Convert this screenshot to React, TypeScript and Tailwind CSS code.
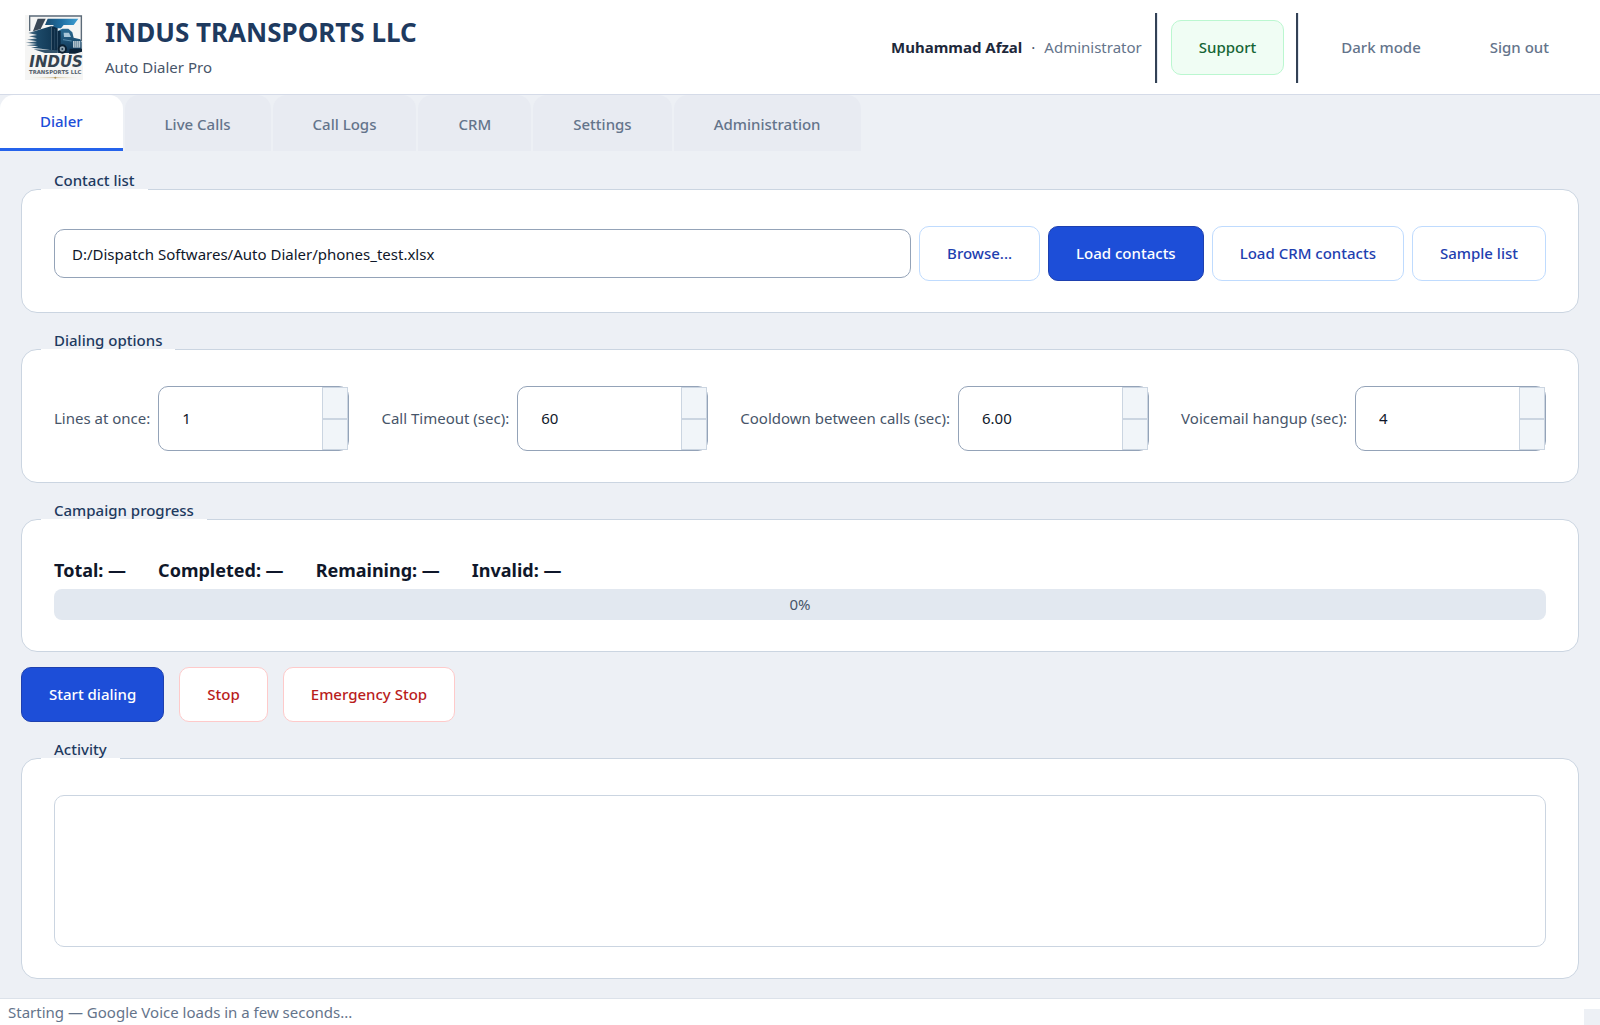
import { useState, type ReactNode } from "react";

const tabs = ["Dialer", "Live Calls", "Call Logs", "CRM", "Settings", "Administration"];

const options = [
  { id: "lines", label: "Lines at once:", value: "1" },
  { id: "timeout", label: "Call Timeout (sec):", value: "60" },
  { id: "cooldown", label: "Cooldown between calls (sec):", value: "6.00" },
  { id: "voicemail", label: "Voicemail hangup (sec):", value: "4" },
];

const stats = ["Total", "Completed", "Remaining", "Invalid"];

function Logo() {
  return (
    <svg viewBox="0 0 174 195" className="h-[65px] w-[58px]" role="img" aria-label="Indus Transports LLC">
      <defs>
        <linearGradient id="bar" x1="0" x2="1">
          <stop offset="0" stopColor="#1b4c70" />
          <stop offset="0.5" stopColor="#1f6fa3" />
          <stop offset="1" stopColor="#3fa0d4" />
        </linearGradient>
        <linearGradient id="trailer" x1="0" x2="1">
          <stop offset="0" stopColor="#6f8798" />
          <stop offset="0.45" stopColor="#1d4a69" />
          <stop offset="1" stopColor="#123a57" />
        </linearGradient>
        <linearGradient id="cab" x1="0" x2="0" y1="0" y2="1">
          <stop offset="0" stopColor="#2b6c94" />
          <stop offset="1" stopColor="#0f3352" />
        </linearGradient>
        <linearGradient id="gold" gradientUnits="userSpaceOnUse" x1="14" x2="162" y1="0" y2="0">
          <stop offset="0" stopColor="#e9dfc8" stopOpacity="0" />
          <stop offset="0.5" stopColor="#cdb98c" />
          <stop offset="1" stopColor="#e9dfc8" stopOpacity="0" />
        </linearGradient>
      </defs>
      <rect width="174" height="195" fill="#f5f5f4" />
      <path d="M14 48V3H169V78" fill="none" stroke="#5c6b79" strokeWidth="4" />
      <path d="M38 11H62L47 42L24 49Z" fill="#3a4755" />
      <path d="M68 11H160L146 30H116L108 40H82L86 30H60Z" fill="url(#bar)" />
      <path d="M10 54L80 33V106L48 101L18 98L40 94L4 91L36 87L2 83L36 79L6 74L36 70L12 64L36 60Z" fill="url(#trailer)" />
      <path d="M80 33L98 40V110L80 106Z" fill="#0d2c46" />
      <path d="M89 42V104" stroke="#3f617b" strokeWidth="1.5" />
      <path d="M98 48L112 41H130L142 52L146 68L166 73L170 82V108L150 114H98Z" fill="url(#cab)" />
      <path d="M116 53H132L138 66H117Z" fill="#a9c6d8" />
      <path d="M98 48H107V104H98Z" fill="#0b2a44" />
      <path d="M144 78H166V98H144Z" fill="#b7c7d2" />
      <path d="M149 78V98M154 78V98M160 78V98" stroke="#56758c" strokeWidth="2" />
      <path d="M114 74L140 78" stroke="#77a7c6" strokeWidth="2" />
      <path d="M134 101H171V110L150 116H132Z" fill="#0c2338" />
      <path d="M26 103L98 106V114H60Z" fill="#33536c" />
      <circle cx="112" cy="102" r="14" fill="#0b1f31" />
      <circle cx="112" cy="102" r="8" fill="#8fa3b1" />
      <circle cx="112" cy="102" r="3" fill="#1d3950" />
      <text x="13" y="155" fontSize="45" fontWeight="700" fontStyle="italic" fontFamily="DejaVu Sans, sans-serif" fill="#34424f">INDUS</text>
      <text x="12" y="176" fontSize="16" fontWeight="700" fontFamily="DejaVu Sans, sans-serif" fill="#55616d">TRANSPORTS LLC</text>
      <path d="M14 188H162" stroke="url(#gold)" strokeWidth="3" />
      <circle cx="91" cy="188" r="3" fill="#b08f4e" />
    </svg>
  );
}

function Panel({ title, children, grow = false }: { title: string; children: ReactNode; grow?: boolean }) {
  return (
    <section className={grow ? "flex flex-1 flex-col" : "flex flex-col"}>
      <h2 className="relative z-10 -mb-px ml-5 h-[22px] w-fit border-b border-white px-[13px] leading-6 font-medium text-[#1e3a5f]">
        {title}
      </h2>
      <div className="flex flex-1 flex-col rounded-2xl border border-[#cbd5e1] bg-white px-8 pt-9 pb-[31px]">{children}</div>
    </section>
  );
}

const tones = {
  plain: "border-[#bfdbfe] bg-white text-[#1e40af]",
  solid: "border-[#1e40af] bg-[#1d4ed8] text-white",
  danger: "border-[#fecaca] bg-white text-[#b91c1c]",
  green: "border-[#bbf7d0] bg-[#f0fdf4] text-[#166534]",
  ghost: "border-transparent bg-transparent text-[#64748b]",
};

function Button({ tone, children }: { tone: keyof typeof tones; children: ReactNode }) {
  return (
    <button type="button" className={`h-[55px] rounded-[10px] border px-[27px] font-medium whitespace-nowrap ${tones[tone]}`}>
      {children}
    </button>
  );
}

function SpinBox({ id, label, value }: { id: string; label: string; value: string }) {
  const [current, setCurrent] = useState(value);
  const step = (delta: number) =>
    setCurrent((v) => (Number(v) + delta).toFixed(value.includes(".") ? 2 : 0));
  return (
    <div className="flex min-w-0 flex-1 basis-auto items-center gap-2">
      <label htmlFor={id} className="whitespace-nowrap text-[#475569]">
        {label}
      </label>
      <div className="flex h-[65px] min-w-0 flex-1 rounded-[10px] border border-[#94a3b8] bg-white">
        <input
          id={id}
          value={current}
          onChange={(e) => setCurrent(e.target.value)}
          className="w-0 min-w-0 flex-1 bg-transparent pl-[23px] text-[#0f172a] outline-none"
        />
        <div className="flex w-[26px] flex-col">
          <button type="button" aria-label={`Increase ${label}`} onClick={() => step(1)} className="flex-1 border border-[#cbd5e1] bg-[#f1f5f9]" />
          <button type="button" aria-label={`Decrease ${label}`} onClick={() => step(-1)} className="flex-1 border border-[#cbd5e1] bg-[#f1f5f9]" />
        </div>
      </div>
    </div>
  );
}

function Divider() {
  return <div className="h-[70px] w-[3px] border-r border-l-2 border-r-[#e2e8f0] border-l-[#334155]" />;
}

export default function App() {
  const [active, setActive] = useState("Dialer");
  const [path, setPath] = useState("D:/Dispatch Softwares/Auto Dialer/phones_test.xlsx");
  return (
    <div className="flex min-h-screen flex-col bg-[#edf0f5] font-['Noto_Sans',sans-serif] text-[15px]">
      <header className="flex h-[95px] items-center border-b border-[#d5dbe8] bg-white pt-px pr-[23px] pl-[25px]">
        <Logo />
        <div className="ml-[22px] flex flex-col gap-[11px]">
          <h1 className="text-[26px] leading-7 font-bold whitespace-nowrap text-[#1e3a5f]">INDUS TRANSPORTS LLC</h1>
          <p className="leading-5 text-[#475569]">Auto Dialer Pro</p>
        </div>
        <div className="ml-auto flex items-center">
          <p className="mr-[13px] whitespace-nowrap text-[#64748b]">
            <strong className="font-bold text-[#1e293b]">Muhammad Afzal</strong>
            <span className="mx-[9px] text-[#475569]">·</span>
            Administrator
          </p>
          <Divider />
          <div className="mr-3 ml-[13px] flex">
            <Button tone="green">Support</Button>
          </div>
          <Divider />
          <div className="ml-[14px] flex gap-[13px]">
            <Button tone="ghost">Dark mode</Button>
            <Button tone="ghost">Sign out</Button>
          </div>
        </div>
      </header>

      <nav className="flex gap-0.5" role="tablist">
        {tabs.map((tab) => (
          <button
            key={tab}
            type="button"
            role="tab"
            aria-selected={tab === active}
            onClick={() => setActive(tab)}
            className={
              tab === active
                ? "h-14 rounded-t-[14px] border-b-[3px] border-[#2563eb] bg-white px-10 font-medium text-[#1d4ed8]"
                : "h-14 rounded-t-[14px] bg-[#e8ebf2] px-10 pt-0.5 font-medium text-[#64748b]"
            }
          >
            {tab}
          </button>
        ))}
      </nav>

      <main className="flex flex-1 flex-col gap-[15px] px-[21px] pt-[17px] pb-[19px]">
        <Panel title="Contact list">
          <div className="flex items-center gap-2">
            <input
              aria-label="Contact list file"
              value={path}
              onChange={(e) => setPath(e.target.value)}
              className="h-[49px] min-w-0 flex-1 rounded-[10px] border border-[#94a3b8] bg-white px-[17px] text-[#0f172a] outline-none"
            />
            <Button tone="plain">Browse...</Button>
            <Button tone="solid">Load contacts</Button>
            <Button tone="plain">Load CRM contacts</Button>
            <Button tone="plain">Sample list</Button>
          </div>
        </Panel>

        <Panel title="Dialing options">
          <div className="flex gap-8">
            {options.map((o) => (
              <SpinBox key={o.id} {...o} />
            ))}
          </div>
        </Panel>

        <Panel title="Campaign progress">
          <div className="flex gap-8 text-[18px] leading-7 font-bold text-[#0f172a]">
            {stats.map((s) => (
              <span key={s}>{s}: —</span>
            ))}
          </div>
          <div role="progressbar" aria-label="Campaign progress" aria-valuenow={0} className="mt-[5px] flex h-[31px] items-center justify-center rounded-lg bg-[#e2e8f0] text-[#475569]">
            0%
          </div>
        </Panel>

        <div className="flex gap-[15px]">
          <Button tone="solid">Start dialing</Button>
          <Button tone="danger">Stop</Button>
          <Button tone="danger">Emergency Stop</Button>
        </div>

        <Panel title="Activity" grow>
          <textarea aria-label="Activity" readOnly className="flex-1 resize-none rounded-[10px] border border-[#cbd5e1] bg-white p-3 outline-none" />
        </Panel>
      </main>

      <footer className="flex h-[27px] items-center justify-between border-t border-[#dce2ea] bg-white pl-2 text-[#64748b]">
        <span>Starting — Google Voice loads in a few seconds...</span>
        <span className="size-4 self-end bg-[#edf0f5]" />
      </footer>
    </div>
  );
}
